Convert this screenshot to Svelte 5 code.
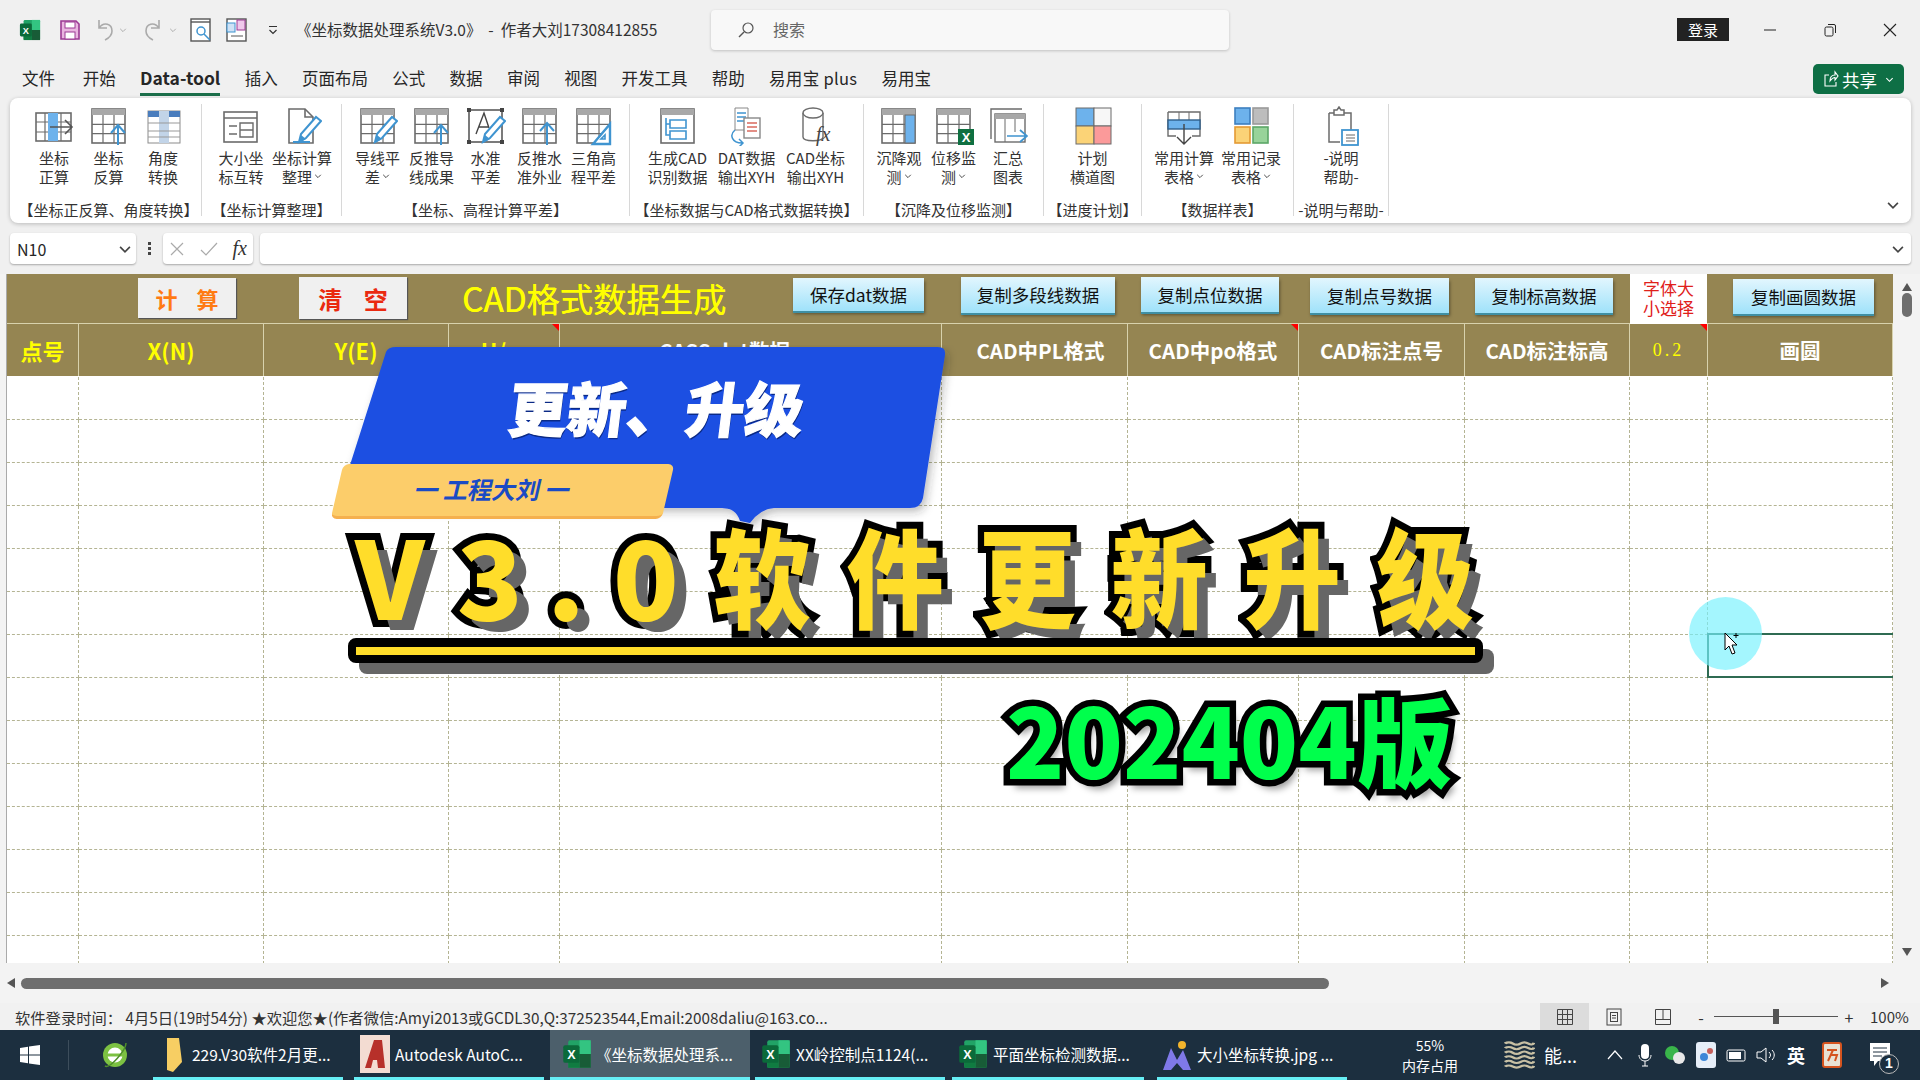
<script>
  const G = '#6b6b6b', B = '#3f94d0', L = '#6db2ec';
  const table = (c = 4, r = 4) => {
    let s = `<rect x="3" y="3" width="33" height="34" fill="#fff" stroke="${G}" stroke-width="1.6"/><rect x="3" y="3" width="33" height="6" fill="#a8a8a8"/>`;
    for (let i = 1; i < c; i++) s += `<path d="M${3 + (33 * i) / c} 9V37" stroke="${G}" stroke-width="1.2"/>`;
    for (let i = 1; i < r; i++) s += `<path d="M3 ${9 + (28 * i) / r}H36" stroke="${G}" stroke-width="1.2"/>`;
    return s;
  };
  const arrowUp = `<path d="M29 39V20M22 27l7-8 7 8" fill="none" stroke="${B}" stroke-width="2"/>`;
  const pencil = `<path d="M17 36l2-8 15-17 5 4-15 17z" fill="#fff" stroke="${B}" stroke-width="2"/><path d="M17 37l2-8 5 4z" fill="${B}"/>`;
  const icons = {
    a: `<rect x="2" y="7" width="35" height="28" fill="#fff" stroke="${G}" stroke-width="1.6"/><path d="M2 16H37M2 26H37M11 7V35M27 7V35" stroke="${G}" stroke-width="1.2"/><rect x="14" y="7" width="10" height="28" fill="${L}"/><path d="M16 21H37M31 14l7 7-7 7" fill="none" stroke="#555" stroke-width="1.6"/>`,
    b: table(3, 3) + arrowUp,
    c: `<rect x="5" y="5" width="32" height="32" fill="#fff" stroke="#8b8b8b"/><rect x="16" y="5" width="10" height="32" fill="#c2d4e8"/><path d="M5 17H37M5 25H37M5 31H37" stroke="#999"/><rect x="5" y="5" width="11" height="6" fill="#4a7dbd"/><rect x="26" y="5" width="11" height="6" fill="#4a7dbd"/>`,
    d: `<rect x="3" y="6" width="33" height="30" fill="#fff" stroke="${G}" stroke-width="1.6"/><path d="M3 12H36M8 20h8M8 28h8" stroke="${G}" stroke-width="1.4"/><path d="M19 17h13v7H19zM19 24h13v7H19z" fill="none" stroke="${G}" stroke-width="1.4"/>`,
    e: `<path d="M7 3H23L31 11V37H7Z" fill="#fff" stroke="${G}" stroke-width="1.6"/><path d="M23 3V11H31" fill="none" stroke="${G}" stroke-width="1.6"/><path d="M11 36H28" stroke="${B}" stroke-width="2"/>` + pencil,
    f: table(3, 3) + pencil,
    g: `<rect x="3" y="4" width="33" height="32" fill="#fff" stroke="#444" stroke-width="1.4"/><rect x="1" y="2" width="4" height="4" fill="#444"/><rect x="34" y="2" width="4" height="4" fill="#444"/><rect x="1" y="34" width="4" height="4" fill="#444"/><rect x="34" y="34" width="4" height="4" fill="#444"/><path d="M10 28L18 7l5 15M13 21h9" fill="none" stroke="#444" stroke-width="1.4"/>` + pencil,
    h: table(3, 3) + `<path d="M27 39V17M20 25l7-8 7 8" fill="none" stroke="${B}" stroke-width="2"/>`,
    i: table(3, 3) + `<path d="M36 18V38H19Z" fill="#fff" stroke="${B}" stroke-width="2.4"/><path d="M31 29v4h-4z" fill="none" stroke="${B}" stroke-width="1.6"/>`,
    j: `<rect x="3" y="3" width="33" height="34" fill="#fff" stroke="${G}" stroke-width="1.6"/><rect x="3" y="3" width="33" height="6" fill="#a8a8a8"/><path d="M12 14h16v8H12zM12 25h16v8H12z" fill="none" stroke="${B}" stroke-width="1.6"/><path d="M8 12V29h4M8 18h4" fill="none" stroke="${B}" stroke-width="1.6"/>`,
    k: `<path d="M8 2H21V24H8z" fill="#fff" stroke="#888"/><path d="M10 7h9M10 11h9M10 15h7" stroke="${B}" stroke-width="1.4"/><rect x="17" y="12" width="16" height="20" fill="#fff" stroke="#888" stroke-width="1.4"/><path d="M20 17h10M20 21h10M20 25h10" stroke="#d9695d" stroke-width="1.5"/><path d="M8 24C2 29 5 37 15 37M12 33l4 4-4 4" fill="none" stroke="${B}" stroke-width="1.5"/>`,
    l: `<path d="M7 7V31C7 36 27 36 27 31V7" fill="#fff" stroke="${G}" stroke-width="1.4"/><ellipse cx="17" cy="7" rx="10" ry="5" fill="#fff" stroke="${G}" stroke-width="1.4"/><text x="20" y="35" font-family="Liberation Serif" font-style="italic" font-size="20" fill="#444">fx</text>`,
    m: table(3, 3) + `<rect x="26" y="9" width="10" height="28" fill="${L}" stroke="${G}"/>`,
    n: table(3, 3) + `<rect x="24" y="23" width="16" height="16" fill="#0f7041"/><text x="32" y="36" text-anchor="middle" font-family="Liberation Sans" font-weight="700" font-size="13" fill="#fff">X</text>`,
    o: `<path d="M3 33V3H34" fill="none" stroke="${G}" stroke-width="1.4"/><rect x="7" y="8" width="30" height="28" fill="#fff" stroke="${G}" stroke-width="1.4"/><rect x="7" y="8" width="30" height="5" fill="#a8a8a8"/><path d="M17 13V36M27 13V26" stroke="${G}"/><path d="M19 30H38M32 24l7 6-7 6" fill="none" stroke="${B}" stroke-width="1.7"/>`,
    p: `<rect x="3" y="2" width="18" height="18" fill="${L}" stroke="${G}"/><rect x="21" y="2" width="17" height="18" fill="#f7f7f7" stroke="${G}"/><rect x="3" y="20" width="18" height="18" fill="#fbd377" stroke="${G}"/><rect x="21" y="20" width="17" height="18" fill="#fb9a9a" stroke="${G}"/>`,
    q: `<path d="M4 6H36V30H28M12 30H4V6" fill="#fff" stroke="${G}" stroke-width="1.4"/><path d="M15 6V14M25 6V14" stroke="${G}"/><rect x="4" y="14" width="32" height="9" fill="${L}" stroke="#2f5f8a" stroke-width="1.4"/><path d="M20 18V38M13 31l7 7 7-7" fill="none" stroke="#444" stroke-width="1.4"/>`,
    r: `<rect x="4" y="2" width="15" height="16" fill="${L}" stroke="#3c7fc0" stroke-width="1.6"/><rect x="22" y="2" width="15" height="16" fill="#bdbdbd" stroke="#999" stroke-width="1.6"/><rect x="4" y="21" width="15" height="16" fill="#fbd377" stroke="#e49a34" stroke-width="1.6"/><rect x="22" y="21" width="15" height="16" fill="#98d39a" stroke="#5ca767" stroke-width="1.6"/>`,
    s: `<path d="M8 7H13M23 7H30V25M19 36H8V7" fill="#fff" stroke="${G}" stroke-width="1.5"/><path d="M13 9V4H16L18 1L20 4H23V9Z" fill="#fff" stroke="${G}" stroke-width="1.5"/><rect x="21" y="24" width="16" height="15" fill="#fff" stroke="${B}" stroke-width="1.8"/><path d="M25 29h9M25 32h9M25 35h9" stroke="#666"/>`
  };
  const ribbon = [
    { w: 186, iw: 54.5, label: '【坐标正反算、角度转换】', items: [['a', '坐标', '正算'], ['b', '坐标', '反算'], ['c', '角度', '转换']] },
    { w: 140, iw: 61, label: '【坐标计算整理】', items: [['d', '大小坐', '标互转'], ['e', '坐标计算', '整理', 1]] },
    { w: 288, iw: 54, label: '【坐标、高程计算平差】', items: [['f', '导线平', '差', 1], ['b', '反推导', '线成果'], ['g', '水准', '平差'], ['h', '反推水', '准外业'], ['i', '三角高', '程平差']] },
    { w: 234, iw: 69, label: '【坐标数据与CAD格式数据转换】', items: [['j', '生成CAD', '识别数据'], ['k', 'DAT数据', '输出XYH'], ['l', 'CAD坐标', '输出XYH']] },
    { w: 180, iw: 54.5, label: '【沉降及位移监测】', items: [['m', '沉降观', '测', 1], ['n', '位移监', '测', 1], ['o', '汇总', '图表']] },
    { w: 98, iw: 60, label: '【进度计划】', items: [['p', '计划', '横道图']] },
    { w: 152, iw: 67, label: '【数据样表】', items: [['q', '常用计算', '表格', 1], ['r', '常用记录', '表格', 1]] },
    { w: 95, iw: 60, label: '-说明与帮助-', items: [['s', '-说明', '帮助-']] }
  ];
  const tabs = ['文件', '开始', 'Data-tool', '插入', '页面布局', '公式', '数据', '审阅', '视图', '开发工具', '帮助', '易用宝 plus', '易用宝'];
  const cols = '72px 185px 185px 111px 382px 186px 171px 166px 165px 78px 185px';
  const colCount = 11;
  const rowCount = 14;
  const head = [
    ['点号', 'y'], ['X(N)', 'y'], ['Y(E)', 'y'], ['H/m', 'y', 1], ['CASS dat数据', 'w pr'], ['CAD中PL格式', 'w pl'],
    ['CAD中po格式', 'w', 1], ['CAD标注点号', 'w'], ['CAD标注标高', 'w'], ['0.2', 's', 1], ['画圆', 'w']
  ];
  const bigChars = [['V', 90, 1], ['3', 110, 1], ['.', 42, 1], ['0', 118, 1], ['软', 114], ['件', 152], ['更', 112], ['新', 152], ['升', 114], ['级', 152]];
  const tasks = [
    { t: '229.V30软件2月更...', w: 190, ml: 0, k: 'folder' },
    { t: 'Autodesk AutoC...', w: 190, ml: 11, k: 'cad' },
    { t: '《坐标数据处理系...', w: 200, ml: 6, k: 'xl', on: true },
    { t: 'XX岭控制点1124(...', w: 190, ml: 5, k: 'xl' },
    { t: '平面坐标检测数据...', w: 192, ml: 7, k: 'xl' },
    { t: '大小坐标转换.jpg ...', w: 190, ml: 13, k: 'pic' }
  ];
</script>

{#snippet xl(s)}
  <svg width={s} height={s} viewBox="0 0 24 24">
    <rect x="5" y="1" width="18" height="22" rx="1.5" fill="#21a366"/>
    <rect x="14" y="1" width="9" height="11" fill="#33c481"/>
    <rect x="5" y="12" width="9" height="11" fill="#107c41"/>
    <rect x="14" y="12" width="9" height="11" fill="#185c37"/>
    <rect x="1" y="5" width="13" height="14" rx="1.5" fill="#0b6a3a"/>
    <text x="7.5" y="16" text-anchor="middle" font-family="Liberation Sans" font-weight="700" font-size="10" fill="#fff">X</text>
  </svg>
{/snippet}

{#snippet chev(s = 8, c = '#555')}
  <svg width={s} height={s} viewBox="0 0 10 10"><path d="M1.5 3.5L5 7l3.5-3.5" fill="none" stroke={c} stroke-width="1.2"/></svg>
{/snippet}

<div class="app">
  <header class="title">
    <span class="xl-logo">{@render xl(22)}</span>
    <svg class="qa save" width="20" height="20" viewBox="0 0 20 20"><path d="M1 1H16L19 4V19H1Z" fill="#e9b5e0" stroke="#9c3a94" stroke-width="1.6"/><rect x="5" y="2" width="10" height="6" fill="#fff" stroke="#9c3a94"/><rect x="5" y="12" width="10" height="7" fill="#fff" stroke="#9c3a94"/></svg>
    <svg class="qa undo" width="20" height="24" viewBox="0 0 20 24"><path d="M5 2v8h8M5 10c5-7 13-4 13 3 0 4-3 7-7 9" fill="none" stroke="#aaa" stroke-width="1.6"/></svg>
    <span class="mini">{@render chev(8, '#aaa')}</span>
    <svg class="qa redo" width="20" height="24" viewBox="0 0 20 24"><path d="M15 2v8H7M15 10C10 3 2 6 2 13c0 4 3 7 7 9" fill="none" stroke="#aaa" stroke-width="1.6"/></svg>
    <span class="mini">{@render chev(8, '#aaa')}</span>
    <svg class="qa prev" width="21" height="26" viewBox="0 0 21 26"><rect x="1" y="2" width="19" height="22" fill="#fff" stroke="#555" stroke-width="1.4"/><path d="M1 5H20" stroke="#555" stroke-width="1.4"/><circle cx="11" cy="14" r="4" fill="none" stroke="#3f94d0" stroke-width="1.5"/><path d="M14 17l6 6" stroke="#3f94d0" stroke-width="1.5"/></svg>
    <svg class="qa mac" width="21" height="26" viewBox="0 0 21 26"><rect x="1" y="2" width="19" height="22" fill="#fff" stroke="#555" stroke-width="1.4"/><rect x="1" y="6" width="8" height="9" fill="#cfe2f6" stroke="#3f94d0"/><rect x="11" y="3" width="8" height="10" fill="#f0c8ec" stroke="#9c3a94"/><path d="M5 19h12" stroke="#555"/></svg>
    <svg class="qa more" width="10" height="12" viewBox="0 0 10 12"><path d="M1 2.5H9M1.5 6L5 9.5 8.5 6" fill="none" stroke="#333" stroke-width="1.2"/></svg>
    <span class="doc">《坐标数据处理系统V3.0》  -  作者大刘17308412855</span>
    <div class="search">
      <svg width="18" height="18" viewBox="0 0 18 18"><circle cx="11" cy="7" r="5" fill="none" stroke="#555" stroke-width="1.2"/><path d="M7 11l-5 5" stroke="#555" stroke-width="1.4"/></svg>
      <span>搜索</span>
    </div>
    <span class="login">登录</span>
    <div class="winbtn"><svg width="12" height="12" viewBox="0 0 12 12"><path d="M0 6H12" stroke="#222"/></svg></div>
    <div class="winbtn"><svg width="14" height="14" viewBox="0 0 14 14"><rect x="2" y="4" width="8" height="9" rx="1.5" fill="none" stroke="#222"/><path d="M5 1.5h6a1.5 1.5 0 0 1 1.5 1.5v7" fill="none" stroke="#222"/></svg></div>
    <div class="winbtn"><svg width="14" height="14" viewBox="0 0 14 14"><path d="M1 1L13 13M13 1L1 13" stroke="#222" stroke-width="1.1"/></svg></div>
  </header>

  <nav class="tabs">
    {#each tabs as t}
      <span class="tab" class:cur={t === 'Data-tool'} class:second={t === '开始'} class:plus={t === '易用宝 plus'}>{t}</span>
    {/each}
    <div class="share">
      <svg width="16" height="18" viewBox="0 0 16 18"><path d="M6 5H2V16H13V12M7 11C7 7 9 5 12 5V2L15 6 12 10V7.500C10 7.500 8.500 9 7 11Z" fill="none" stroke="#fff" stroke-width="1.1"/></svg>
      <span class="share-t">共享</span>
      {@render chev(9, '#fff')}
    </div>
  </nav>

  <section class="ribbon">
    {#each ribbon as g}
      <div class="group" style="width:{g.w}px">
        <div class="items">
          {#each g.items as it}
            <div class="item" style="width:{g.iw}px">
              <svg width="40" height="40" viewBox="0 0 40 40">{@html icons[it[0]]}</svg>
              <span class="l1">{it[1]}</span>
              <span class="l2">{it[2]}{#if it[3]}<i class="car">{@render chev(8, '#444')}</i>{/if}</span>
            </div>
          {/each}
        </div>
        <div class="glabel">{g.label}</div>
      </div>
    {/each}
    <span class="collapse">{@render chev(14, '#444')}</span>
  </section>

  <section class="fbar">
    <div class="namebox"><span>N10</span>{@render chev(14, '#444')}</div>
    <span class="dots"></span>
    <div class="fxbox">
      <svg width="16" height="16" viewBox="0 0 16 16"><path d="M2 2L14 14M14 2L2 14" stroke="#aaa" stroke-width="1.2"/></svg>
      <svg width="18" height="16" viewBox="0 0 18 16"><path d="M1 9L6 14 17 2" fill="none" stroke="#aaa" stroke-width="1.2"/></svg>
      <span class="fx">fx</span>
    </div>
    <div class="finput">{@render chev(14, '#444')}</div>
  </section>

  <section class="sheet">
    <div class="gutter"></div>
    <div class="grid-wrap">
      <div class="top">
        <button class="calc">计 算</button>
        <button class="clear">清 空</button>
        <span class="sheet-title">CAD格式数据生成</span>
        <button class="cp c1">保存dat数据</button>
        <button class="cp c2">复制多段线数据</button>
        <button class="cp c3">复制点位数据</button>
        <button class="cp c4">复制点号数据</button>
        <button class="cp c5">复制标高数据</button>
        <div class="fontsel">字体大<br />小选择</div>
        <button class="cp c6">复制画圆数据</button>
      </div>
      <div class="headrow" style="grid-template-columns:{cols}">
        {#each head as h}
          <div class="hc {h[1]}">{h[0]}{#if h[2]}<i class="tri"></i>{/if}</div>
        {/each}
      </div>
      <div class="body" style="grid-template-columns:{cols}">
        {#each Array(rowCount * colCount) as _}
          <div class="cell"></div>
        {/each}
      </div>
    </div>
    <div class="vscroll">
      <svg width="12" height="10" viewBox="0 0 12 10"><path d="M6 1L11 9H1Z" fill="#555"/></svg>
      <span class="vthumb"></span>
      <svg class="vdown" width="12" height="10" viewBox="0 0 12 10"><path d="M6 9L11 1H1Z" fill="#555"/></svg>
    </div>
  </section>

  <section class="hscroll">
    <svg width="10" height="12" viewBox="0 0 10 12"><path d="M1 6L9 1V11Z" fill="#555"/></svg>
    <span class="hthumb"></span>
    <svg class="hright" width="10" height="12" viewBox="0 0 10 12"><path d="M9 6L1 1V11Z" fill="#555"/></svg>
  </section>

  <footer class="status">
    <span class="msg">软件登录时间： 4月5日(19时54分) ★欢迎您★(作者微信:Amyi2013或GCDL30,Q:372523544,Email:2008daliu@163.co...</span>
    <div class="views">
      <span class="view active"><svg width="18" height="18" viewBox="0 0 18 18"><path d="M1.500 1.500h15v15h-15zM1.500 6.500h15M1.500 11.500h15M6.500 1.500v15M11.500 1.500v15" fill="none" stroke="#444"/></svg></span>
      <span class="view"><svg width="18" height="18" viewBox="0 0 18 18"><rect x="2" y="1" width="14" height="16" fill="none" stroke="#444"/><rect x="5.500" y="4.500" width="7" height="9" fill="none" stroke="#444"/><path d="M7 7.500h4M7 10h4" stroke="#444"/></svg></span>
      <span class="view"><svg width="18" height="18" viewBox="0 0 18 18"><path d="M1.500 1.500h15v15h-15zM1.500 11.500h15M9 1.500v10" fill="none" stroke="#444"/></svg></span>
    </div>
    <div class="zoomer">
      <span class="pm">-</span>
      <span class="track"><b></b></span>
      <span class="pm">+</span>
    </div>
    <span class="pct">100%</span>
  </footer>

  <div class="taskbar">
    <svg class="win" width="20" height="20" viewBox="0 0 20 20"><path d="M0 3l8-1.200V9.500H0zM9 1.600L20 0V9.500H9zM0 10.500h8v7.700L0 17zM9 10.500h11V20L9 18.400z" fill="#fff"/></svg>
    <span class="tsep"></span>
    <svg class="ie" width="30" height="30" viewBox="0 0 30 30"><circle cx="15" cy="15" r="12" fill="#7cc142"/><circle cx="15" cy="15" r="7.500" fill="#fff"/><path d="M7 15H23" stroke="#7cc142" stroke-width="3"/><path d="M5 26C10 29 26 10 26 3" fill="none" stroke="#4f8f2a" stroke-width="1.500"/></svg>
    <div class="tasks">
      {#each tasks as t}
        <div class="task {t.k}" class:on={t.on} style="width:{t.w}px;margin-left:{t.ml}px">
          {#if t.k === 'folder'}
            <svg width="20" height="44" viewBox="0 0 20 44"><path d="M2 6H14L17 30 8 40 2 38Z" fill="#f7ce63"/></svg>
          {:else if t.k === 'cad'}
            <svg width="30" height="38" viewBox="0 0 30 38"><rect width="30" height="38" fill="#f3dcd2"/><path d="M5 33L14 5H22L25 33H18L17 25H13L11 33Z" fill="#b7302a"/></svg>
          {:else if t.k === 'xl'}
            {@render xl(30)}
          {:else}
            <svg width="30" height="36" viewBox="0 0 30 36"><circle cx="20" cy="9" r="4" fill="#f3b42c"/><path d="M1 34L9 12 15 24 21 14 29 34H21L15 27 9 34Z" fill="#7f79e8"/></svg>
          {/if}
          <span>{t.t}</span>
        </div>
      {/each}
    </div>
    <div class="mem"><span>55%</span><span>内存占用</span></div>
    <svg class="waves" width="31" height="30" viewBox="0 0 32 52" preserveAspectRatio="none"><path d="M1 6q4-4 8 0t8 0 8 0 6-1M1 14q4-4 8 0t8 0 8 0 6-1M1 22q4-4 8 0t8 0 8 0 6-1M1 30q4-4 8 0t8 0 8 0 6-1M1 38q4-4 8 0t8 0 8 0 6-1M1 46q4-4 8 0t8 0 8 0 6-1" fill="none" stroke="#c8c0a4" stroke-width="3.500"/></svg>
    <span class="neng">能...</span>
    <div class="tray">
      <svg width="16" height="10" viewBox="0 0 16 10"><path d="M1 9L8 1l7 8" fill="none" stroke="#fff" stroke-width="1.200"/></svg>
      <svg class="t-mic" width="14" height="24" viewBox="0 0 14 24"><rect x="3" y="1" width="8" height="15" rx="4" fill="#fff"/><path d="M1 12c0 8 12 8 12 0M7 18v5M4 23h6" fill="none" stroke="#fff"/></svg>
      <svg class="t-we" width="22" height="20" viewBox="0 0 22 20"><circle cx="8" cy="8" r="7" fill="#39b54a"/><circle cx="15" cy="13" r="6" fill="#e8e8e8"/></svg>
      <svg width="20" height="26" viewBox="0 0 20 26"><rect width="20" height="26" rx="3" fill="#e6eef8"/><circle cx="8" cy="15" r="4" fill="#3e88d8"/><circle cx="14" cy="9" r="3" fill="#c6605c"/></svg>
      <svg width="20" height="14" viewBox="0 0 20 14"><rect x="1" y="2" width="18" height="11" rx="1.500" fill="none" stroke="#fff"/><rect x="3" y="4" width="12" height="7" fill="#fff"/></svg>
      <svg width="20" height="18" viewBox="0 0 20 18"><path d="M1 6H5L10 2V16L5 12H1Z" fill="none" stroke="#fff"/><path d="M13 6c2 2 2 4 0 6M16 4c3 3 3 7 0 10" fill="none" stroke="#fff"/></svg>
      <span class="ime">英</span>
      <svg class="t-or" width="20" height="26" viewBox="0 0 20 26"><rect x="1" y="1" width="18" height="24" rx="2" fill="#e8e2d4" stroke="#d5541f" stroke-width="2"/><path d="M5 8h10M11 8L6 19M8 13h7l-2 6" fill="none" stroke="#d5541f" stroke-width="2"/></svg>
    </div>
    <div class="notify">
      <svg width="20" height="24" viewBox="0 0 20 24"><path d="M0 0H20V18H8L4 23V18H0Z" fill="#fff"/><path d="M3 5H17M3 9H17M3 13H12" stroke="#1c2f3f"/></svg>
      <b>1</b>
    </div>
  </div>

  <div class="overlay">
    <svg class="banner" width="620" height="190" viewBox="0 0 620 190">
      <defs><filter id="bs" x="-5%" y="-5%" width="112%" height="115%"><feDropShadow dx="3" dy="4" stdDeviation="4" flood-color="#333" flood-opacity=".3"/></filter></defs>
      <path d="M46 7Q48 2 56 2H598Q606 2 605 10L583 153Q581 163 570 163H434Q420 164 410 178L400 176Q396 163 382 163H14L10 120Z" fill="#1c50e2" filter="url(#bs)"/>
    </svg>
    <div class="ban-text">更新、升级</div>
    <div class="tag"><span>一 工程大刘 一</span></div>

    <div class="big">
      {#each bigChars as c}
        <span class="bc" class:latin={c[2]} style="width:{c[1]}px">{c[0]}</span>
      {/each}
    </div>
    <div class="bar"></div>
    <div class="ver">202404版</div>

    <div class="sel"></div>
    <div class="halo"></div>
    <svg class="cursor" width="16" height="24" viewBox="0 0 16 24"><path d="M1 1V18L5 14 8 22 11 21 8 13H13Z" fill="#fff" stroke="#000"/><path d="M12 1V6M9.500 3.500H14.500" stroke="#000"/></svg>
  </div>
</div>

<style>
  :global(body) { margin: 0; background: #f0f0f0; }
  .app {
    position: relative; width: 1920px; height: 1080px; overflow: hidden;
    display: flex; flex-direction: column; background: #f0f0f0; color: #262626;
    font-family: "Noto Sans CJK SC", "Noto Sans", sans-serif;
  }
  svg { display: block; flex: none; }

  .title { height: 60px; display: flex; align-items: center; flex: none; }
  .xl-logo { margin-left: 19px; }
  .save { margin-left: 19px; }
  .undo { margin-left: 14px; }
  .mini { margin-left: 5px; }
  .redo { margin-left: 17px; }
  .prev { margin-left: 13px; }
  .mac { margin-left: 15px; }
  .more { margin-left: 21px; }
  .doc { margin-left: 18px; margin-top: -2px; font-size: 15.500px; width: 400px; white-space: pre; color: #333; }
  .search {
    position: absolute; left: 711px; top: 10px; width: 518px; height: 40px; box-sizing: border-box;
    background: #f8f8f8; border-radius: 4px; box-shadow: 0 1px 3px #0003; display: flex; align-items: center;
    padding-left: 26px; gap: 18px; font-size: 16px; color: #666;
  }
  .search span { margin-top: -2px; }
  .login {
    margin-left: auto; width: 52px; height: 23px; background: #222; color: #fff; font-size: 15px;
    display: flex; align-items: center; justify-content: center; margin-right: 11px; margin-top: -2px;
  }
  .winbtn { width: 60px; display: flex; justify-content: center; }

  .tabs { height: 38px; flex: none; display: flex; align-items: flex-start; padding-left: 22px; gap: 24.3px; position: relative; font-size: 16.5px; box-sizing: border-box; }
  .tab { height: 34px; line-height: 36px; white-space: nowrap; }
  .tab.second { margin-left: 3.5px; }
  .tab.plus { letter-spacing: .3px; }
  .tab.cur { font-weight: 700; border-bottom: 3px solid #1b6e4a; font-size: 17.500px; height: 33px; line-height: 35px; }
  .share {
    position: absolute; left: 1813px; top: 4px; width: 91px; height: 30px; background: #0e6f45; border-radius: 5px;
    display: flex; align-items: center; gap: 3px; justify-content: center; color: #fff; font-size: 17.500px;
  }
  .share-t { margin-right: 5px; }

  .ribbon {
    position: relative; margin-left: 10px; width: 1901px; height: 125px; flex: none; box-sizing: border-box;
    padding: 6px 0 0 6px; background: #fff; border-radius: 8px; box-shadow: 0 1px 4px #0000003a; display: flex;
  }
  .group { height: 112px; box-sizing: border-box; border-right: 1px solid #d8d8d8; display: flex; flex-direction: column; align-items: center; flex: none; }
  .items { display: flex; flex: none; height: 96px; padding-top: 2px; box-sizing: border-box; justify-content: center; }
  .item { display: flex; flex-direction: column; align-items: center; font-size: 15px; line-height: 19px; white-space: nowrap; color: #333; }
  .item svg { margin-bottom: 2px; }
  .l1, .l2 { display: flex; align-items: center; height: 19px; }
  .car { margin-left: 2px; }
  .glabel { flex: none; font-size: 15px; line-height: 20px; white-space: nowrap; color: #333; }
  .collapse { position: absolute; right: 11px; top: 100px; }

  .fbar { display: flex; align-items: stretch; height: 31px; margin: 10px 9px 10px 10px; flex: none; }
  .namebox, .fxbox, .finput { background: #fff; border-radius: 4px; box-shadow: 0 1px 2px #0000004d; display: flex; align-items: center; box-sizing: border-box; }
  .namebox { width: 126px; padding: 0 4px 0 7px; justify-content: space-between; font-size: 16px; }
  .dots { width: 3px; height: 3px; margin: 9px 12px 0 12px; background: #444; box-shadow: 0 5px #444, 0 10px #444; }
  .fxbox { width: 90px; padding: 0 6px; justify-content: space-between; margin-right: 7px; }
  .fx { font: italic 20px "Liberation Serif", serif; color: #333; }
  .finput { flex: 1; justify-content: flex-end; padding-right: 6px; }

  .sheet { display: flex; height: 689px; flex: none; background: #fff; overflow: hidden; }
  .gutter { width: 7px; background: #f3f3f3; border-right: 1px solid #aaa; box-sizing: border-box; flex: none; }
  .grid-wrap { width: 1886px; flex: none; overflow: hidden; }
  .top { height: 50px; background: #958552; display: flex; align-items: flex-start; box-sizing: border-box; border-bottom: 1px solid #d8d2ad; }
  button { border: 0; padding: 0; font-family: inherit; }
  .calc, .clear { background: #f0f0f0; box-shadow: 1px 1px 1px #555; font-weight: 700; }
  .calc { margin: 4px 0 0 131px; width: 98px; height: 40px; color: #ff7a12; font-size: 22px; letter-spacing: 7px; padding-left: 7px; }
  .clear { margin: 3px 0 0 63px; width: 108px; height: 42px; color: #ea2a10; font-size: 24px; letter-spacing: 8px; padding-left: 8px; }
  .sheet-title { margin: 2px 0 0 55px; width: 265px; height: 42px; line-height: 44px; color: #ffff00; font-size: 33.300px; white-space: nowrap; text-shadow: .4px 0 #ff0; }
  .cp {
    flex: none; background: linear-gradient(#e2f6fe, #9fe2fa); box-shadow: 0 2px 0 #3f8fa3, 1px 3px 3px #0006;
    font-size: 17.500px; color: #111; line-height: 1;
  }
  .c1 { margin: 4px 0 0 66px; width: 131px; height: 33px; }
  .c2 { margin: 3px 0 0 37px; width: 154px; height: 36px; }
  .c3 { margin: 3px 0 0 26px; width: 138px; height: 35px; }
  .c4 { margin: 4px 0 0 31px; width: 139px; height: 35px; }
  .c5 { margin: 4px 0 0 26px; width: 138px; height: 35px; }
  .c6 { margin: 5px 0 0 26px; width: 141px; height: 35px; }
  .fontsel { margin-left: 17px; width: 77px; height: 50px; background: #fff; color: #e0201a; font-size: 17px; line-height: 20px; text-align: center; padding-top: 4px; box-sizing: border-box; }
  .tri { position: absolute; right: 0; top: 0; border-top: 7px solid #f00; border-left: 7px solid transparent; }

  .headrow { display: grid; height: 52px; background: #958552; box-sizing: border-box; }
  .hc { position: relative; display: flex; align-items: center; justify-content: center; border-right: 1px solid #d8d2ad; box-sizing: border-box; font-weight: 700; white-space: nowrap; }
  .hc.y { color: #ffff00; font-size: 22px; }
  .hc.w { color: #fff; font-size: 20.500px; }
  .hc.pl { padding-left: 12px; }
  .hc.pr { padding-right: 52px; }
  .hc.s { color: #ffff00; font-size: 18px; font-weight: 400; font-family: "Liberation Serif", serif; letter-spacing: 3px; }

  .body { display: grid; grid-auto-rows: 43px; margin-top: 1px; }
  .cell { border-right: 1px dashed #b4b493; border-bottom: 1px dashed #b4b493; box-sizing: border-box; }

  .vscroll { flex: 1; background: #f3f3f3; position: relative; display: flex; flex-direction: column; align-items: center; padding-top: 8px; }
  .vthumb { width: 10px; height: 24px; background: #6e6e6e; border-radius: 5px; margin-top: 1px; }
  .vdown { margin-top: auto; margin-bottom: 6px; }

  .hscroll { height: 40px; flex: none; display: flex; align-items: center; padding-left: 6px; background: #f3f3f3; }
  .hthumb { width: 1308px; height: 11px; border-radius: 6px; background: #6e6e6e; margin-left: 5px; }
  .hright { margin-left: 551px; }

  .status { height: 27px; flex: none; display: flex; align-items: center; font-size: 15.300px; color: #333; background: #f1f1f1; }
  .msg { margin-left: 15px; width: 1525px; white-space: nowrap; }
  .views { display: flex; align-items: stretch; height: 27px; }
  .view { width: 49px; display: flex; align-items: center; justify-content: center; }
  .view.active { background: #dcdcdc; }
  .zoomer { display: flex; align-items: center; margin-left: 9px; }
  .pm { width: 10px; text-align: center; font-size: 16px; }
  .track { position: relative; width: 124px; height: 1px; background: #555; margin: 0 6px 0 8px; }
  .track b { position: absolute; left: 59px; top: -7px; width: 6px; height: 15px; background: #555; }
  .pct { margin-left: 16px; font-size: 15px; }

  .taskbar { height: 50px; flex: none; display: flex; align-items: center; background: #1c2f3f; color: #fff; position: relative; }
  .win { margin-left: 20px; }
  .tsep { width: 1px; height: 30px; background: #3d4e5c; margin-left: 28px; }
  .ie { margin-left: 31px; }
  .tasks { display: flex; margin-left: 23px; height: 50px; }
  .task { display: flex; align-items: center; gap: 7px; height: 50px; box-sizing: border-box; border-bottom: 3px solid #66eef5; padding-left: 12px; font-size: 15.5px; white-space: nowrap; overflow: hidden; flex: none; }
  .task.cad { padding-left: 6px; gap: 5px; }
  .task.xl:not(.on) { padding-left: 6px; gap: 5px; }
  .task.on { gap: 4px; background: #4c5f6b; }
  .task.pic { padding-left: 5px; gap: 5px; }
  .mem { position: absolute; left: 1390px; width: 80px; display: flex; flex-direction: column; align-items: center; font-size: 14px; line-height: 20px; }
  .waves { position: absolute; left: 1504px; top: 10px; }
  .neng { position: absolute; left: 1544px; font-size: 18px; }
  .tray { position: absolute; left: 1607px; display: flex; align-items: center; gap: 10px; }
  .t-mic { margin-left: 5px; }
  .t-we { margin-left: 2px; }
  .ime { font-size: 18px; font-weight: 700; margin-left: 1px; }
  .t-or { margin-left: 7px; }
  .notify { position: absolute; left: 1870px; top: 13px; }
  .notify b { position: absolute; left: 9px; top: 11px; width: 20px; height: 20px; border: 1.500px solid #bbb; border-radius: 50%; background: #1c2f3f; box-sizing: border-box; text-align: center; font: 700 14px/17px "Liberation Sans", sans-serif; }

  .overlay { position: absolute; inset: 0; pointer-events: none; }
  .banner { position: absolute; left: 340px; top: 345px; }
  .ban-text { position: absolute; left: 509px; top: 369px; font-size: 59px; line-height: 76px; font-weight: 900; color: #fff; white-space: nowrap; -webkit-text-stroke: 1.200px #fff; text-shadow: 1px 2px 0 #0b2a86; transform: skewX(-7deg); }
  .tag {
    position: absolute; left: 337px; top: 464px; width: 331px; height: 55px; box-sizing: border-box;
    background: #fccd6a; border-bottom: 3px solid #f5b04e; border-radius: 6px; transform: skewX(-13deg);
    display: flex; align-items: center; justify-content: center;
  }
  .tag span { margin: -4px 20px 0 0; font-size: 24px; font-weight: 700; color: #1a4bc4; white-space: nowrap; }
  .big { position: absolute; left: 345px; top: 508px; display: flex; }
  .bc {
    display: flex; justify-content: center; font-size: 108px; line-height: 130px; font-weight: 900; color: #ffdd2a;
    -webkit-text-stroke: 14px #000; paint-order: stroke fill; text-shadow: 12px 10px 0 #666; transform: scaleX(.9);
  }
  .bc.latin { transform: none; }
  .bar {
    position: absolute; left: 348px; top: 638px; width: 1135px; height: 25px; box-sizing: border-box;
    background: #ffdd2a; border: solid #000; border-width: 9px 8px 8px; border-radius: 8px; box-shadow: 11px 11px 0 #666;
  }
  .ver {
    position: absolute; left: 1006px; top: 668px; font-size: 96px; line-height: 140px; font-weight: 900; color: #00ff4c; white-space: nowrap;
    -webkit-text-stroke: 13px #000; paint-order: stroke fill; text-shadow: 5px 9px 7px #0006;
  }
  .sel { position: absolute; left: 1707px; top: 633px; width: 186px; height: 45px; box-sizing: border-box; border: 2px solid #2f6b52; border-right: 0; }
  .halo { position: absolute; left: 1689px; top: 597px; width: 73px; height: 73px; border-radius: 50%; background: #75f1fda8; }
  .cursor { position: absolute; left: 1724px; top: 632px; }
</style>
